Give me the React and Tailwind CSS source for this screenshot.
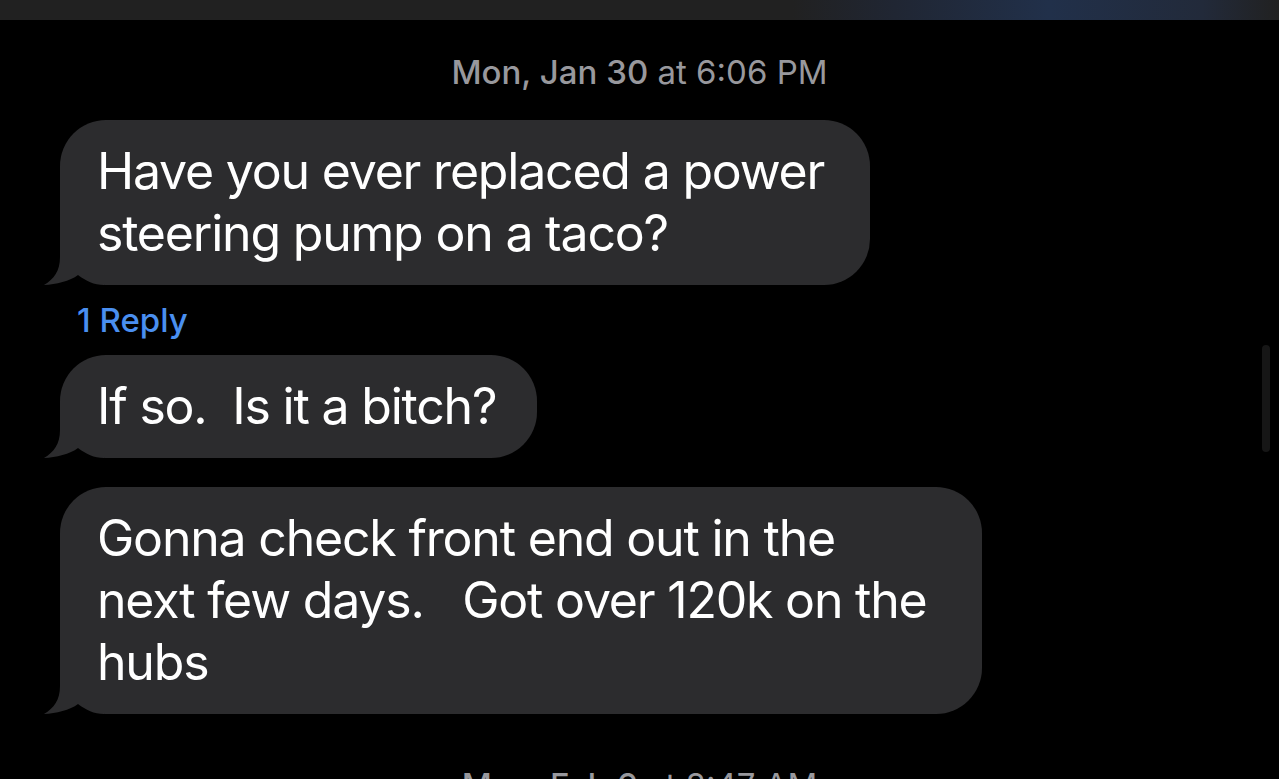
import React from "react";

const Tail = () => (
  <svg
    className="absolute left-[-16px] bottom-0"
    width="60"
    height="50"
    viewBox="0 0 60 50"
  >
    <path
      d="M16 0 L16 22 C16 36 10 44 0 50 L60 50 L60 0 Z"
      fill="#2c2c2e"
    />
    <path
      d="M0 50 C12 49.5 26 46 34 40 C42 46 50 50 60 50 Z"
      fill="#000"
    />
  </svg>
);

const Bubble = ({ width, children }) => (
  <div
    className={`relative ${width} bg-[#2c2c2e] rounded-[46px] pl-[37px] pr-[30px] pt-[20px] pb-[21px] text-white text-[50px] leading-[62px] tracking-[-1.2px] whitespace-pre`}
  >
    <Tail />
    <span className="relative">{children}</span>
  </div>
);

const Stamp = ({ day, time, className }) => (
  <div
    className={`text-center text-[#98989d] text-[33px] leading-[40px] whitespace-nowrap ${className}`}
  >
    <span className="font-medium">{day}</span> at {time}
  </div>
);

export default function App() {
  return (
    <div
      className="relative w-full h-[779px] overflow-hidden bg-black"
      style={{ fontFamily: "Inter, 'Liberation Sans', sans-serif" }}
    >
      <div className="h-[20px] bg-[linear-gradient(90deg,#212121_0%,#212121_62%,#202633_70%,#21304a_82%,#222a3a_94%,#212121_100%)]" />

      <Stamp day="Mon, Jan 30" time="6:06 PM" className="mt-[32px]" />

      <div className="flex flex-col items-start pl-[60px]">
        <div className="mt-[28px]">
          <Bubble width="w-[810px]">
            {"Have you ever replaced a power\nsteering pump on a taco?"}
          </Bubble>
        </div>

        <div className="ml-[17px] mt-[17px] mb-[17px] text-[33px] leading-[36px] text-[#4a8ff0] font-medium">
          1 Reply
        </div>

        <Bubble width="w-[477px]">{"If so.  Is it a bitch?"}</Bubble>

        <div className="mt-[29px]">
          <Bubble width="w-[922px]">
            {"Gonna check front end out in the\nnext few days.   Got over 120k on the\nhubs"}
          </Bubble>
        </div>
      </div>

      <Stamp day="Mon, Feb 6" time="8:47 AM" className="mt-[51px]" />

      <div className="absolute left-[1262px] top-[345px] w-[8px] h-[107px] rounded-full bg-[#161616]" />
    </div>
  );
}
